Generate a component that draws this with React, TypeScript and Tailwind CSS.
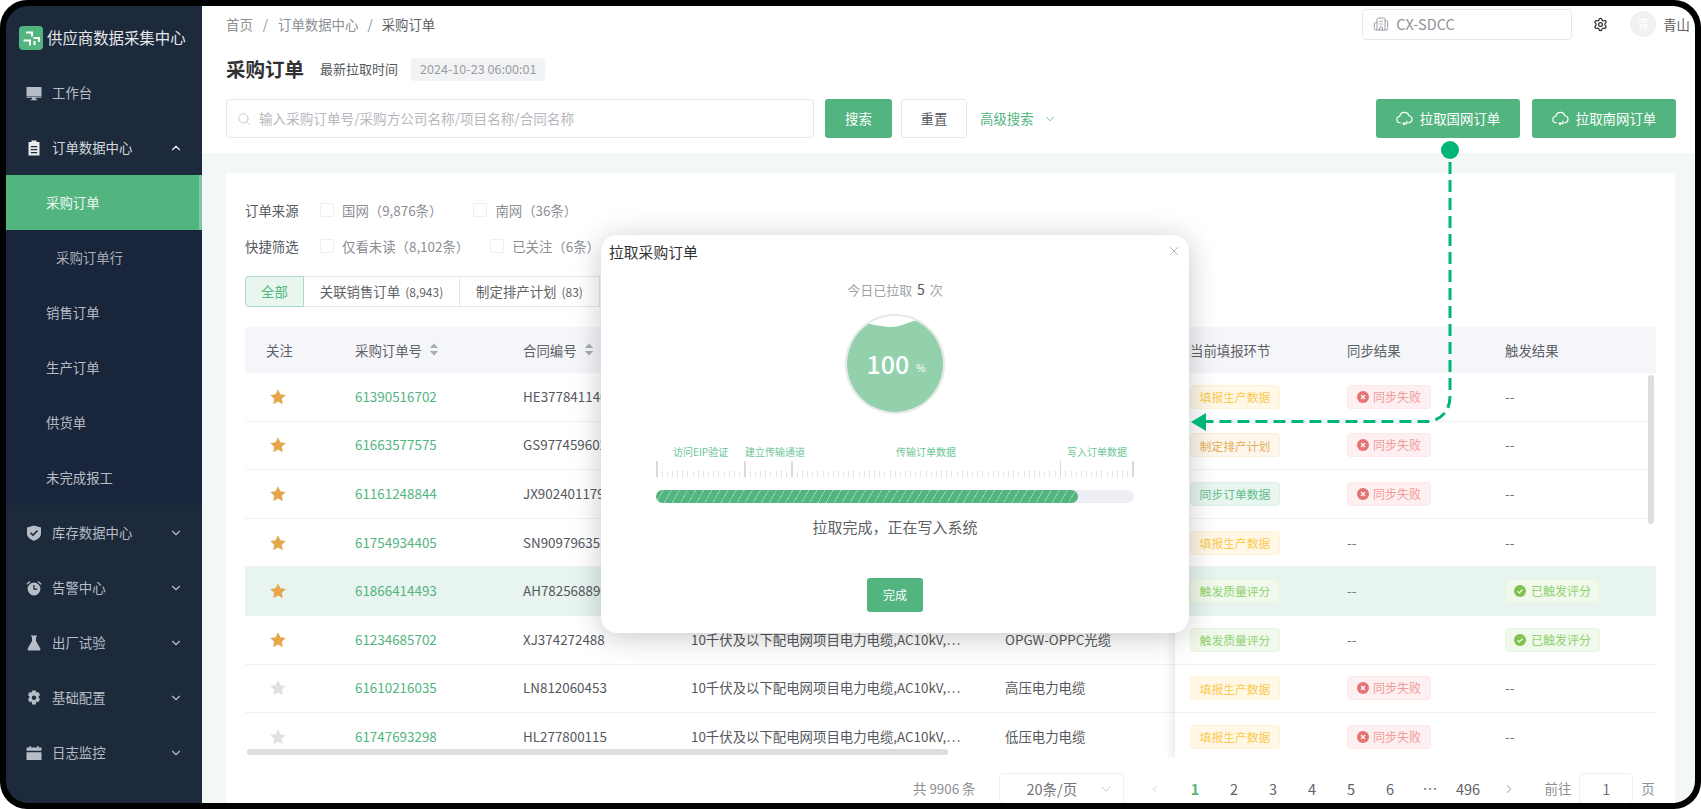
import { ChevronDown, ChevronUp, ChevronLeft, ChevronRight, Search, Settings, X, Building2 } from 'lucide-react'
import type { ReactNode } from 'react'

type Tag = 'fill' | 'plan' | 'sync' | 'quality'

interface Row {
  no: string
  contract: string
  project: string
  product: string
  tag: Tag
  sync: boolean
  trigger: boolean
  star: boolean
  active?: boolean
}

const project = '10千伏及以下配电网项目电力电缆,AC10kV,…'

// project and product of the first five rows sit behind the dialog
const rows: Row[] = [
  { no: '61390516702', contract: 'HE377841146', project: '', product: '', tag: 'fill', sync: true, trigger: false, star: true },
  { no: '61663577575', contract: 'GS977459602', project: '', product: '', tag: 'plan', sync: true, trigger: false, star: true },
  { no: '61161248844', contract: 'JX902401179', project: '', product: '', tag: 'sync', sync: true, trigger: false, star: true },
  { no: '61754934405', contract: 'SN909796351', project: '', product: '', tag: 'fill', sync: false, trigger: false, star: true },
  { no: '61866414493', contract: 'AH782568896', project: '', product: '', tag: 'quality', sync: false, trigger: true, star: true, active: true },
  { no: '61234685702', contract: 'XJ374272488', project, product: 'OPGW-OPPC光缆', tag: 'quality', sync: false, trigger: true, star: true },
  { no: '61610216035', contract: 'LN812060453', project, product: '高压电力电缆', tag: 'fill', sync: true, trigger: false, star: false },
  { no: '61747693298', contract: 'HL277800115', project, product: '低压电力电缆', tag: 'fill', sync: true, trigger: false, star: false },
]

const tagInfo: Record<Tag, { label: string; cls: string }> = {
  fill: { label: '填报生产数据', cls: 'bg-[#fff8e6] border-[#fff3d6] text-[#fcc94f]' },
  plan: { label: '制定排产计划', cls: 'bg-[#fdf6ec] border-[#faefdf] text-[#e6ae5c]' },
  sync: { label: '同步订单数据', cls: 'bg-[#e8f6ef] border-[#dcf1e6] text-[#62bb8c]' },
  quality: { label: '触发质量评分', cls: 'bg-[#f0f9eb] border-[#e7f5df] text-[#8fd16f]' },
}

function Icon({ children }: { children: ReactNode }) {
  return (
    <svg viewBox="0 0 16 16" className="w-[16px] h-[16px] shrink-0" fill="currentColor">
      {children}
    </svg>
  )
}

const menuIcons: Record<string, ReactNode> = {
  monitor: <Icon><path d="M0.5 2h15v9h-15z" /><path d="M0.5 11.6h15v1.2h-15zM6.3 12.8h3.4l.5 1.6h1.3v.9H4.5v-.9h1.3z" /></Icon>,
  clipboard: <Icon><path fillRule="evenodd" d="M5.5 0.5h5v1.5h3v13.5h-11V2h3zM4.8 6v1.3h6.4V6zM4.8 9v1.3h6.4V9zM4.8 12v1.2h6.4V12z" /></Icon>,
  shield: <Icon><path fillRule="evenodd" d="M8 .5 15 2.5v6c0 3.4-3 5.9-7 7.2C4 14.400 1 11.900 1 8.500v-6zM5 7.300 4 8.400 7 11.200 12 6.200 11 5.100 7 9z" /></Icon>,
  alarm: <Icon><path fillRule="evenodd" d="M8 2.600a6.400 6.400 0 1 1 0 12.800 6.400 6.400 0 0 1 0-12.800zM7.300 5v4.700h4V8.500H8.600V5z" /><path d="M.4 3.700 3.600.9l.9 1L1.300 4.700zM15.600 3.700 12.400.9l-.9 1 3.200 2.800z" /></Icon>,
  flask: <Icon><path d="M5 .5h6v1.300h-1v4.200l4.300 7.600c.4.800 0 1.900-1 1.900H2.700c-1 0-1.400-1.100-1-1.900L6 6V1.800H5z" /></Icon>,
  gear: <Icon><path fillRule="evenodd" d="M6.200.6h3.600l.6 2 1.900-.7 1.800 3.100-1.500 1.400c.1.400.1 1 0 1.300l1.500 1.500-1.800 3.100-1.900-.7-.6 2.800H6.200l-.6-2.800-1.900.7L1.900 9.200l1.500-1.500c-.1-.3-.1-.9 0-1.300L1.900 5l1.800-3.100 1.900.7zM8 5.600a2.200 2.200 0 1 0 0 4.400 2.200 2.200 0 0 0 0-4.400z" /></Icon>,
  calendar: <Icon><path d="M.5 2.500h3V1h1.500v1.500h6V1h1.500v1.500h3v3.300H.5zM.5 7.200h15V15H.5z" /></Icon>,
}

function MenuItem({ icon, label, open, leaf }: { icon: string; label: string; open?: boolean; leaf?: boolean }) {
  return (
    <div className="h-[55px] flex items-center pl-[20px] pr-[19px] text-[13.400px] text-[#b7bdc6]">
      <span className={open ? 'text-[#e8eaed]' : ''}>{menuIcons[icon]}</span>
      <span className={`ml-[10px] flex-1 ${open ? 'text-[#d5d9de]' : ''}`}>{label}</span>
      {!leaf && (open ? <ChevronUp className="w-[14px] h-[14px] text-[#e8eaed]" /> : <ChevronDown className="w-[14px] h-[14px]" />)}
    </div>
  )
}

function Sidebar() {
  return (
    <div className="w-[196px] shrink-0 bg-[#1c2a3b] flex flex-col">
      <div className="h-[59px] flex items-center pl-[13px] pt-[5px]">
        <svg viewBox="0 0 24 24" className="w-[24px] h-[24px] shrink-0">
          <rect width="24" height="24" rx="4" fill="#52b580" />
          <path d="M7 6.500H13V10.500M14.500 12H20V16M4.500 14.500H11V19.500M15.500 15V19" stroke="#fff" strokeWidth="2" fill="none" />
        </svg>
        <span className="ml-[4px] text-[15.400px] text-[#e6e8eb] whitespace-nowrap">供应商数据采集中心</span>
      </div>
      <div>
        <MenuItem icon="monitor" label="工作台" leaf />
        <MenuItem icon="clipboard" label="订单数据中心" open />
        <div className="bg-[#19253a]">
          <div className="h-[55px] flex items-center pl-[40px] bg-[#52b580] border-r-[3px] border-[#7cc8a0] text-[13.400px] text-[#eef8f3]">采购订单</div>
          <div className="h-[55px] flex items-center pl-[50px] text-[13.400px] text-[#a9afb8]">采购订单行</div>
          {['销售订单', '生产订单', '供货单', '未完成报工'].map((t) => (
            <div key={t} className="h-[55px] flex items-center pl-[40px] text-[13.400px] text-[#b7bdc6]">{t}</div>
          ))}
        </div>
        <MenuItem icon="shield" label="库存数据中心" />
        <MenuItem icon="alarm" label="告警中心" />
        <MenuItem icon="flask" label="出厂试验" />
        <MenuItem icon="gear" label="基础配置" />
        <MenuItem icon="calendar" label="日志监控" />
      </div>
    </div>
  )
}

function CloudIcon() {
  return (
    <svg viewBox="0 0 18 16" className="w-[17px] h-[15px]" fill="none" stroke="currentColor" strokeWidth="1.200">
      <path d="M5 12.500H4.500a3.500 3.500 0 0 1-.5-7 5 5 0 0 1 9.700-.5 3.800 3.800 0 0 1 .3 7.500h-1.500" />
      <path d="M11.500 10.500v3h-4M9 12l-1.600 1.500L9 15" />
    </svg>
  )
}

function Header() {
  return (
    <div className="h-[147px] shrink-0 bg-white pl-[24px] pr-[19px] pt-[3px]">
      <div className="h-[30px] flex items-center -mr-[14px] text-[13.400px]">
        <span className="text-[#8c8f95]">首页</span>
        <span className="mx-[10px] text-[#8c8f95]">/</span>
        <span className="text-[#8c8f95]">订单数据中心</span>
        <span className="mx-[9px] text-[#8c8f95]">/</span>
        <span className="text-[#606266]">采购订单</span>
        <div className="ml-auto w-[210px] h-[31px] border border-[#e4e7ed] rounded-[4px] flex items-center pl-[10px] text-[#8f9299]">
          <Building2 className="w-[16px] h-[16px]" strokeWidth={1.300} />
          <span className="ml-[7px] text-[14.500px]">CX-SDCC</span>
        </div>
        <Settings className="ml-[21px] w-[15px] h-[15px] text-[#303133]" strokeWidth={2} />
        <div className="ml-[22px] w-[26px] h-[26px] rounded-full bg-[#f0f1f2] text-white text-[12px] flex items-center justify-center">青</div>
        <span className="ml-[7px] text-[#606266] text-[13.400px]">青山</span>
      </div>
      <div className="h-[30px] mt-[15px] flex items-center">
        <span className="text-[19.500px] font-bold text-[#303133]">采购订单</span>
        <span className="ml-[16px] text-[13px] text-[#55585e]">最新拉取时间</span>
        <span className="ml-[13px] h-[23px] px-[9px] rounded-[3px] bg-[#f2f3f5] text-[#9a9da3] text-[12.600px] flex items-center">2024-10-23 06:00:01</span>
      </div>
      <div className="mt-[15px] flex items-center">
        <div className="w-[588px] h-[39px] border border-[#e4e7ed] rounded-[4px] flex items-center pl-[10px] text-[#b5b8be]">
          <Search className="w-[14px] h-[14px]" strokeWidth={1.300} />
          <span className="ml-[8px] text-[13.600px]">输入采购订单号/采购方公司名称/项目名称/合同名称</span>
        </div>
        <div className="ml-[11px] w-[67px] h-[39px] rounded-[3px] bg-[#52b580] text-white text-[13.400px] flex items-center justify-center">搜索</div>
        <div className="ml-[9px] w-[66px] h-[39px] rounded-[3px] border border-[#e4e7ed] text-[#55585e] text-[13.400px] flex items-center justify-center">重置</div>
        <span className="ml-[13px] text-[#52b580] text-[13.400px]">高级搜索</span>
        <ChevronDown className="ml-[9px] w-[14px] h-[14px] text-[#52b580]" strokeWidth={1.500} />
        <div className="ml-auto w-[144px] h-[39px] rounded-[3px] bg-[#52b580] text-white text-[13.400px] flex items-center justify-center gap-[7px]">
          <CloudIcon />拉取国网订单
        </div>
        <div className="ml-[12px] w-[144px] h-[39px] rounded-[3px] bg-[#52b580] text-white text-[13.400px] flex items-center justify-center gap-[7px]">
          <CloudIcon />拉取南网订单
        </div>
      </div>
    </div>
  )
}

function Check({ label, className }: { label: string; className?: string }) {
  return (
    <div className={`flex items-center ${className ?? ''}`}>
      <span className="w-[14px] h-[14px] border border-[#eceef1] rounded-[2px]" />
      <span className="ml-[8px] text-[13.400px] text-[#8c8f95]">{label}</span>
    </div>
  )
}

function Sort() {
  return (
    <svg viewBox="0 0 10 14" className="ml-[7px] w-[10px] h-[13px] text-[#a8abb2]" fill="currentColor">
      <path d="M5 0.500 9.500 5.500H.5zM5 13.500.5 8.500h9z" />
    </svg>
  )
}

function Star({ on }: { on: boolean }) {
  return (
    <svg viewBox="0 0 16 16" className={`w-[16px] h-[16px] ${on ? 'text-[#e6a64d]' : 'text-[#dfe1e5]'}`} fill="currentColor">
      <path d="M8 .3l2.400 5 5.400.7-4 3.800 1 5.500L8 12.600l-4.800 2.700 1-5.500-4-3.800 5.400-.7z" />
    </svg>
  )
}

function Fail() {
  return (
    <span className="w-[84px] h-[24px] rounded-[4px] bg-[#fef0f0] border border-[#fde8e8] flex items-center justify-center text-[12px] text-[#f09a9a]">
      <svg viewBox="0 0 12 12" className="w-[12px] h-[12px] mr-[4px]">
        <circle cx="6" cy="6" r="6" fill="#e57373" />
        <path d="M4 4l4 4M8 4l-4 4" stroke="#fff" strokeWidth="1.200" />
      </svg>
      同步失败
    </span>
  )
}

function Triggered() {
  return (
    <span className="w-[95px] h-[24px] rounded-[4px] bg-[#f0f9eb] border border-[#e7f5df] flex items-center justify-center text-[12px] text-[#8fd16f]">
      <svg viewBox="0 0 12 12" className="w-[12px] h-[12px] mr-[5px]">
        <circle cx="6" cy="6" r="6" fill="#7fc250" />
        <path d="M3.500 6.200l1.800 1.800 3.200-3.400" stroke="#fff" strokeWidth="1.200" fill="none" />
      </svg>
      已触发评分
    </span>
  )
}

function Table() {
  return (
    <div className="relative h-[430px] overflow-hidden text-[13.400px]">
      <div className="flex">
        {/* left columns */}
        <div className="w-[930px] shrink-0">
          <div className="h-[46px] bg-[#f5f6fa] flex items-center text-[#606266]">
            <div className="w-[110px] pl-[21px]">关注</div>
            <div className="w-[168px] flex items-center">采购订单号<Sort /></div>
            <div className="w-[168px] flex items-center">合同编号<Sort /></div>
          </div>
          {rows.map((r) => (
            <div key={r.no} className={`h-[48.600px] flex items-center border-b ${r.active ? 'bg-[#e7f4ef] border-transparent' : 'border-[#f0f1f3]'}`}>
              <div className="w-[110px] pl-[25px]"><Star on={r.star} /></div>
              <div className="w-[168px] pb-[2px] text-[#52b580]">{r.no}</div>
              <div className="w-[168px] pb-[2px] text-[#55585e]">{r.contract}</div>
              <div className="w-[314px] pb-[2px] text-[#55585e] whitespace-nowrap">{r.project}</div>
              <div className="w-[170px] pb-[2px] text-[#55585e]">{r.product}</div>
            </div>
          ))}
        </div>
        {/* fixed right columns */}
        <div className="flex-1 bg-white shadow-[-6px_0_8px_-2px_rgba(0,0,0,0.08)] z-10">
          <div className="h-[46px] bg-[#f5f6fa] flex items-center text-[#606266]">
            <div className="w-[15px]" />
            <div className="w-[157px]">当前填报环节</div>
            <div className="w-[158px]">同步结果</div>
            <div>触发结果</div>
          </div>
          {rows.map((r) => (
            <div key={r.no} className={`h-[48.600px] flex items-center border-b ${r.active ? 'bg-[#e7f4ef] border-transparent' : 'border-[#f0f1f3]'}`}>
              <div className="w-[15px]" />
              <div className="w-[157px]">
                <span className={`w-[90px] h-[24px] rounded-[4px] border flex items-center justify-center text-[11.800px] ${tagInfo[r.tag].cls}`}>{tagInfo[r.tag].label}</span>
              </div>
              <div className="w-[158px] text-[#73767a]">{r.sync ? <Fail /> : <span className="block pb-[2px]">--</span>}</div>
              <div className="text-[#73767a]">{r.trigger ? <Triggered /> : <span className="block pb-[2px]">--</span>}</div>
            </div>
          ))}
        </div>
      </div>
      {/* scrollbars */}
      <div className="absolute left-[2px] top-[422px] w-[701px] h-[6px] rounded-full bg-[#dcdde0] z-20" />
      <div className="absolute right-[2px] top-[48px] w-[6px] h-[149px] rounded-full bg-[#dcdde0] z-20" />
    </div>
  )
}

function Pagination() {
  return (
    <div className="flex items-center h-[31px] mt-[16px] whitespace-nowrap text-[14.500px] text-[#606266]">
      <span className="ml-[668px] shrink-0 text-[13.400px] text-[#8c8f95]">共 9906 条</span>
      <div className="ml-[23px] w-[125px] shrink-0 h-[31px] border border-[#eceef1] rounded-[4px] flex items-center pl-[27px] pr-[9px] text-[14.500px] text-[#73767a]">
        <span className="flex-1">20条/页</span>
        <ChevronDown className="w-[16px] h-[16px] text-[#c0c4cc]" strokeWidth={1.300} />
      </div>
      <ChevronLeft className="ml-[24px] w-[14px] h-[14px] shrink-0 text-[#c0c4cc]" strokeWidth={1.300} />
      <div className="ml-[14px] flex items-center shrink-0">
        {['1', '2', '3', '4', '5', '6', '•••', '496'].map((p, i) => (
          <span key={p} className={`w-[39px] text-center ${i === 0 ? 'text-[#52b580] font-semibold' : ''} ${i === 6 ? 'text-[7px] font-bold tracking-[-2px]' : ''}`}>{p}</span>
        ))}
      </div>
      <ChevronRight className="ml-[14px] w-[14px] h-[14px] shrink-0 text-[#73767a]" strokeWidth={1.300} />
      <span className="ml-[29px] shrink-0 text-[13.400px] text-[#8c8f95]">前往</span>
      <div className="ml-[8px] w-[54px] shrink-0 h-[31px] border border-[#eceef1] rounded-[4px] flex items-center justify-center text-[#73767a]">1</div>
      <span className="ml-[8px] shrink-0 text-[13.400px] text-[#8c8f95]">页</span>
    </div>
  )
}

function Panel() {
  return (
    <div className="h-full bg-white px-[19px] pt-[27px]">
      <div className="h-[20px] flex items-center">
        <span className="w-[75px] text-[13.400px] text-[#55585e]">订单来源</span>
        <Check label="国网（9,876条）" />
        <Check label="南网（36条）" className="ml-[31px]" />
      </div>
      <div className="h-[20px] mt-[16px] flex items-center">
        <span className="w-[75px] text-[13.400px] text-[#55585e]">快捷筛选</span>
        <Check label="仅看未读（8,102条）" />
        <Check label="已关注（6条）" className="ml-[21px]" />
      </div>
      <div className="mt-[20px] flex h-[31px] text-[13.400px] text-[#606266]">
        <div className="w-[59px] rounded-l-[4px] bg-[#e8f6ef] border border-[#a9dcc0] text-[#52b580] flex items-center justify-center">全部</div>
        <div className="w-[156px] border-y border-r border-[#e4e7ed] flex items-center justify-center gap-[5px]">关联销售订单<span className="text-[12px]">(8,943)</span></div>
        <div className="w-[140px] border-y border-r border-[#e4e7ed] flex items-center justify-center gap-[5px]">制定排产计划<span className="text-[12px]">(83)</span></div>
      </div>
      <div className="mt-[20px]"><Table /></div>
      <Pagination />
    </div>
  )
}

const tallTicks = [0, 17, 26, 78, 92]

function Modal() {
  return (
    <div className="absolute left-[601px] top-[235px] w-[588px] h-[398px] z-30 bg-white rounded-[16px] shadow-[0_4px_30px_rgba(0,0,0,0.22)]">
      <div className="relative h-[36px] pl-[8px] pt-[6px] text-[14.800px] text-[#303133]">
        拉取采购订单
        <X className="absolute right-[8px] top-[9px] w-[14px] h-[14px] text-[#9a9da3]" strokeWidth={1.300} />
      </div>
      <div className="mt-[8px] text-center text-[13px] text-[#a0a3a9]">
        今日已拉取 <span className="mx-[2px] text-[14px] text-[#55585e]">5</span> 次
      </div>
      <div className="relative mx-auto mt-[14px] w-[100px] h-[100px]">
        <svg viewBox="0 0 100 100" className="w-[100px] h-[100px]">
          <defs>
            <clipPath id="ball"><circle cx="50" cy="50" r="48" /></clipPath>
          </defs>
          <circle cx="50" cy="50" r="49" fill="#fff" stroke="#e6e8ea" strokeWidth="2" />
          <path clipPath="url(#ball)" d="M0 5C12 5 30 13 45 13 58 13 66 6 76 6 86 6 92 10 100 10V100H0z" fill="#93d0ac" />
        </svg>
        <div className="absolute inset-0 flex items-center justify-center text-white pl-[2px]">
          <span className="text-[25px] font-medium">100</span>
          <span className="ml-[7px] mt-[6px] text-[10px]">%</span>
        </div>
      </div>
      <div className="mx-[55px] mt-[30px]">
        <div className="flex h-[14px] items-center text-[10px] text-[#6cc596] whitespace-nowrap">
          <span className="ml-[17px] w-[54px]">访问EIP验证</span>
          <span className="ml-[18px] w-[60px]">建立传输通道</span>
          <span className="ml-[91px] w-[60px]">传输订单数据</span>
          <span className="ml-[111px] w-[60px]">写入订单数据</span>
        </div>
        <div className="mt-[2px] h-[17px] flex items-end justify-between">
          {Array.from({ length: 93 }, (_, i) => (
            <span key={i} className={tallTicks.includes(i) ? 'w-[1.500px] h-[16px] bg-[#d8dadd]' : 'w-[1px] h-[6px] bg-[#e3e4e7]'} />
          ))}
        </div>
        <div className="mt-[13px] h-[13px] rounded-full bg-[#eceef3]">
          <div className="w-[422px] h-[13px] rounded-full bg-[#52b580] bg-[repeating-linear-gradient(120deg,#52b580_0,#52b580_6px,#8ed0ab_6px,#8ed0ab_7px)]" />
        </div>
        <div className="mt-[13px] text-center text-[15px] text-[#606266]">拉取完成，正在写入系统</div>
      </div>
      <div className="absolute left-[266px] top-[343px] w-[56px] h-[34px] rounded-[3px] bg-[#52b580] text-white text-[12px] flex items-center justify-center">完成</div>
    </div>
  )
}

export default function App() {
  return (
    <div className="relative w-[1701px] h-[809px] bg-white overflow-hidden font-['Noto_Sans_CJK_SC','Noto_Sans',sans-serif]">
      <div className="w-full h-full bg-black rounded-[27px] p-[6px]">
        <div className="w-full h-full rounded-[22px] overflow-hidden flex">
          <Sidebar />
          <div className="flex-1 flex flex-col min-w-0">
            <Header />
            <div className="flex-1 min-h-0 bg-[#f3f7f8] pt-[20px] pl-[24px] pr-[20px]">
              <Panel />
            </div>
          </div>
        </div>
      </div>
      <Modal />
      {/* guide arrow */}
      <svg viewBox="0 0 1701 809" className="absolute inset-0 w-[1701px] h-[809px] z-40 pointer-events-none">
        <circle cx="1450" cy="150" r="9" fill="#00b578" />
        <path d="M1450 162V396Q1450 416 1431 421.500H1206" fill="none" stroke="#00b578" strokeWidth="3" strokeDasharray="12 6" />
        <path d="M1191 422 1206 413V431z" fill="#00b578" />
      </svg>
    </div>
  )
}
